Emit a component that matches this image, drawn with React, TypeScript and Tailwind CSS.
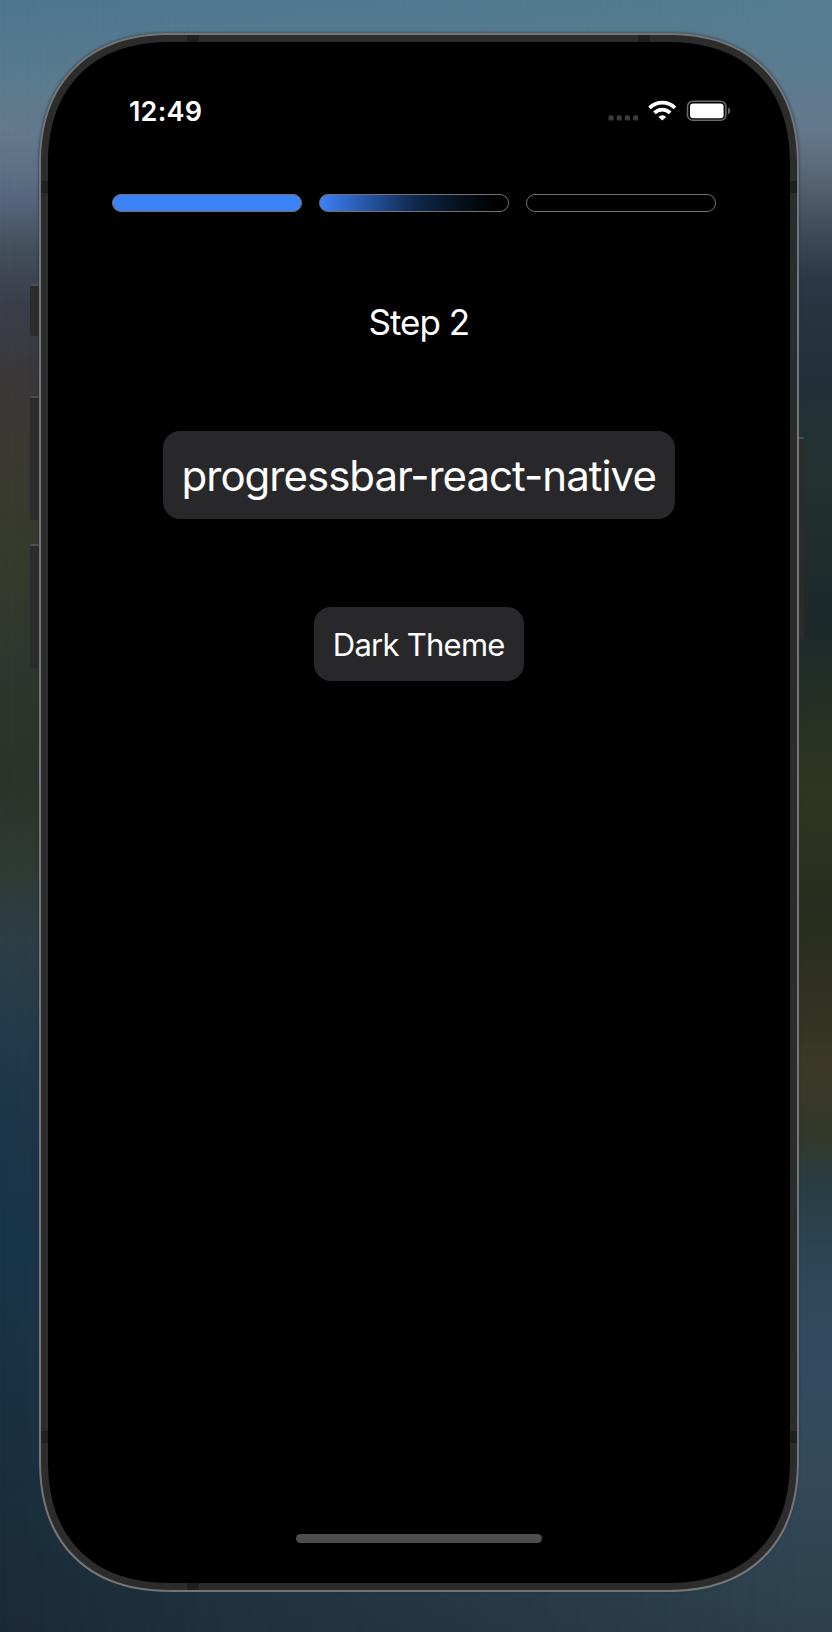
const ring = "border border-[#727274]";

function StatusIcons() {
  return (
    <svg width="124" height="24" viewBox="0 0 124 24" fill="none">
      {[0, 1, 2, 3].map((i) => (
        <rect key={i} x={0.4 + i * 8.2} y="15.2" width="5.2" height="5.4" rx="1.5" fill="#3b3b3b" />
      ))}
      <g stroke="#fff" strokeWidth="3.6">
        <path d="M41.5 7.9a18.2 18.2 0 0 1 25.6 0" />
        <path d="M46.4 12.9a11.2 11.2 0 0 1 15.8 0" />
      </g>
      <path d="M50.4 16.9a5.6 5.6 0 0 1 7.8 0L54.3 20.6Z" fill="#fff" />
      <rect x="79.5" y="1.3" width="38.4" height="19" rx="5.3" stroke="#6a6a6a" strokeWidth="1.6" />
      <rect x="82" y="3.6" width="33.6" height="14.6" rx="3" fill="#fff" />
      <path d="M120 7.6q2.4 1 2.4 3.3t-2.4 3.3Z" fill="#626262" />
    </svg>
  );
}

export default function App() {
  return (
    <div className="relative flex h-[1632px] w-[832px] flex-col overflow-hidden bg-[#20303a] font-['Inter',sans-serif]">
      <div className="absolute inset-0 bg-[linear-gradient(180deg,#4d7690_0px,#5a7b8e_80px,#64798d_130px,#5f7288_165px,#53647c_205px,#444f5b_250px,#3b3f4c_300px,#3b3839_380px,#3a3932_450px,#373b2d_560px,#2f3730_660px,#2b332a_780px,#303a35_870px,#2d3f47_940px,#213a4c_1040px,#1b354a_1130px,#183449_1250px,#192f3f_1450px,#1b2a36_1632px)]" />
      <div className="absolute inset-0 bg-[linear-gradient(180deg,#547d8f_0px,#5b7b8f_70px,#64788d_130px,#5c6b7c_165px,#46525f_215px,#2b3745_280px,#213039_370px,#22322f_480px,#1b292a_620px,#252f26_700px,#30351f_790px,#282e1f_900px,#2e2f20_980px,#3b3926_1070px,#333829_1130px,#293d43_1190px,#2d4759_1270px,#334b61_1370px,#334958_1480px,#2d3f4d_1632px)] [mask-image:linear-gradient(90deg,transparent_0%,black_96%)]" />
      <div className="absolute left-[30px] top-[284px] h-[52px] w-[10px] rounded-l-[2px] border-t-2 border-t-[#505050] bg-[#2b2b2b]" />
      <div className="absolute left-[30px] top-[396px] h-[124px] w-[10px] rounded-l-[2px] border-t-2 border-t-[#4c4c4c] bg-[#2b2b2b]" />
      <div className="absolute left-[30px] top-[544px] h-[124px] w-[10px] rounded-l-[2px] border-t-2 border-t-[#505050] bg-[#2b2b2b]" />
      <div className="absolute left-[797px] top-[437px] h-[202px] w-[7px] rounded-r-[2px] border-t-2 border-t-[#505050] bg-[#2b2b2b]" />

      <div className="relative ml-[38.5px] mt-[32.5px] flex h-[1559px] w-[760.5px] shrink-0 rounded-[117px] border-2 border-[#757575] bg-[#2c2c2c] p-[7px] shadow-[0_0_3px_#223340] supports-[corner-shape:squircle]:rounded-[132px] supports-[corner-shape:squircle]:[corner-shape:superellipse(1.2)]">
        <div className="absolute left-[146px] top-0 h-[7px] w-3 bg-[#1f1f1f]" />
        <div className="absolute left-[597px] top-0 h-[7px] w-3 bg-[#1f1f1f]" />
        <div className="absolute bottom-0 left-[146px] h-[7px] w-3 bg-[#1f1f1f]" />
        <div className="absolute left-0 top-[146px] h-3 w-[7px] bg-[#1f1f1f]" />
        <div className="absolute right-0 top-[146px] h-3 w-[7px] bg-[#1f1f1f]" />
        <div className="absolute left-0 top-[1396px] h-3 w-[7px] bg-[#1f1f1f]" />
        <div className="absolute right-0 top-[1396px] h-3 w-[7px] bg-[#1f1f1f]" />

        <main className="relative flex flex-1 flex-col items-center rounded-[108px] bg-black text-white supports-[corner-shape:squircle]:rounded-[123px] supports-[corner-shape:squircle]:[corner-shape:superellipse(1.2)]">
          <header className="flex h-[89.5px] w-full items-end justify-between pl-[81.5px] pr-[58px]">
            <span className="h-[38px] text-[27px] font-semibold leading-[38px] tracking-[0.2px]">12:49</span>
            <div className="h-[31.5px] w-[124px]">
              <StatusIcons />
            </div>
          </header>

          <div className="mr-[9px] mt-[63px] flex w-[604px] justify-between">
            <div className={`h-[18px] w-[190px] rounded-full bg-[#3b82f6] ${ring}`} />
            <div className={`h-[18px] w-[190px] rounded-full bg-[linear-gradient(90deg,#3b82f6_0%,#2a5eb5_20%,#10294d_50%,#061321_72%,#000_94%)] ${ring}`} />
            <div className={`h-[18px] w-[190px] rounded-full ${ring}`} />
          </div>

          <h1 className="mt-[87.5px] whitespace-nowrap text-[35px] leading-[44px] tracking-[-1px]">Step 2</h1>

          <div className="mt-[87px] flex h-[88px] w-[512px] items-center justify-center rounded-[17px] bg-[#28282a] pt-[3px]">
            <span className="whitespace-nowrap text-[42px] leading-[50px] tracking-[-1px]">progressbar-react-native</span>
          </div>

          <button className="mt-[88px] flex h-[74px] w-[210px] items-center justify-center rounded-[17px] bg-[#28282a] pt-[3px] text-[31px] leading-[40px] tracking-[-0.75px]">
            <span className="whitespace-nowrap">Dark Theme</span>
          </button>

          <div className="mb-[40px] mt-auto h-[9px] w-[246px] rounded-full bg-[#4d4d4d]" />
        </main>
      </div>
    </div>
  );
}
